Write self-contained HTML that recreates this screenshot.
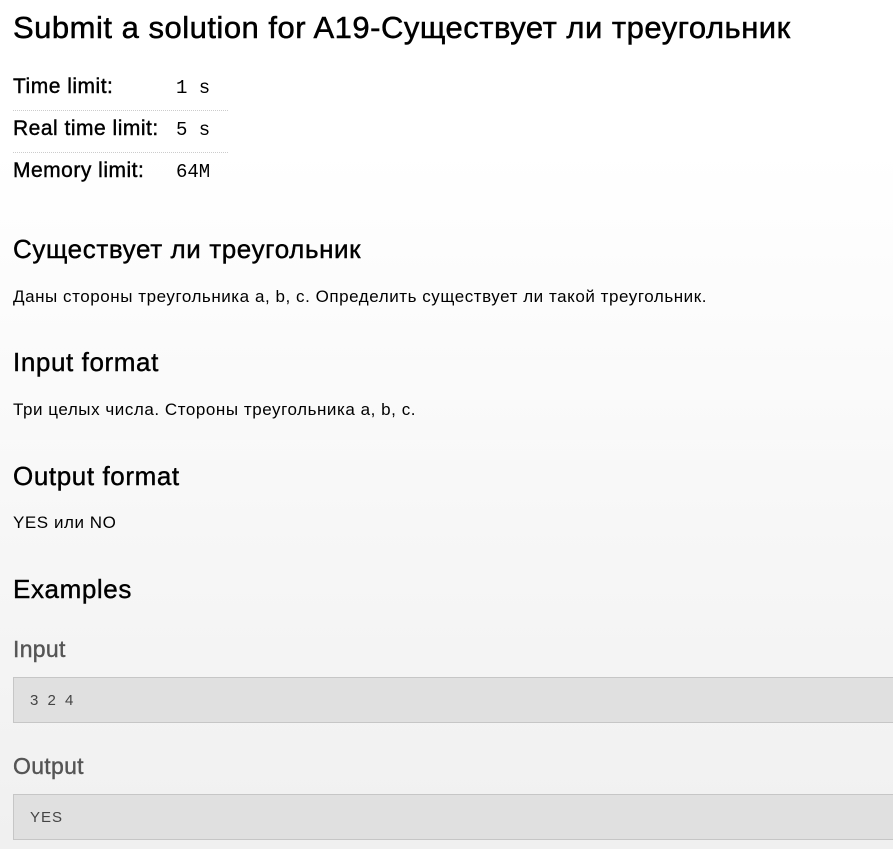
<!DOCTYPE html><html><head><meta charset="utf-8"><style>
body{margin:0;width:893px;height:849px;overflow:hidden;background:linear-gradient(#fff 0,#fff 150px,#f0f0f0 849px);font-family:"Liberation Sans",sans-serif;color:#000}
.a{position:absolute;left:13px;white-space:nowrap}
h1{font-size:31px;font-weight:normal;margin:0;letter-spacing:0.5px;-webkit-text-stroke:0.5px #000}
.l{font-size:21px;letter-spacing:0.5px;-webkit-text-stroke:0.4px #000}
.m{font-family:"Liberation Mono",monospace;font-size:19px;position:absolute;left:176px}
.h{font-size:26px;letter-spacing:0.6px;-webkit-text-stroke:0.4px #000}
.p{font-size:17px;letter-spacing:0.55px}
.g{font-size:23px;color:#555;letter-spacing:0.3px;-webkit-text-stroke:0.4px #555}
.box{position:absolute;left:13px;width:890px;height:46px;background:#e0e0e0;border:1px solid #c6c6c6;font-family:"Liberation Sans",sans-serif;font-size:15px;color:#444;line-height:46px;padding-left:16px;box-sizing:border-box;letter-spacing:1px;word-spacing:3px}
.d{position:absolute;left:13px;width:215px;border-top:1px dotted #ccc}
</style></head><body>
<h1 class="a" style="top:10px">Submit a solution for A19-Существует ли треугольник</h1>
<div class="a l" style="top:75px">Time limit:</div><div class="m" style="top:77px">1 s</div>
<div class="d" style="top:110px"></div>
<div class="a l" style="top:117px">Real time limit:</div><div class="m" style="top:119px">5 s</div>
<div class="d" style="top:152px"></div>
<div class="a l" style="top:159px">Memory limit:</div><div class="m" style="top:161px">64M</div>
<div class="a h" style="top:234px">Существует ли треугольник</div>
<div class="a p" style="top:287px">Даны стороны треугольника a, b, c. Определить существует ли такой треугольник.</div>
<div class="a h" style="top:347px">Input format</div>
<div class="a p" style="top:400px">Три целых числа. Стороны треугольника a, b, c.</div>
<div class="a h" style="top:461px">Output format</div>
<div class="a p" style="top:513px">YES или NO</div>
<div class="a h" style="top:574px">Examples</div>
<div class="a g" style="top:636px">Input</div>
<div class="box" style="top:677px">3 2 4</div>
<div class="a g" style="top:753px">Output</div>
<div class="box" style="top:794px">YES</div>
</body></html>
